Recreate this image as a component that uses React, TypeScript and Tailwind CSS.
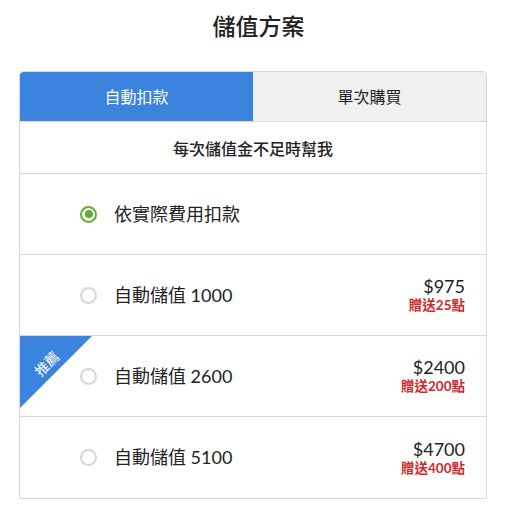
const plans = [
  { label: "自動儲值 1000", price: "$975", bonus: "贈送25點" },
  { label: "自動儲值 2600", price: "$2400", bonus: "贈送200點", recommended: true },
  { label: "自動儲值 5100", price: "$4700", bonus: "贈送400點" },
];

export default function App() {
  return (
    <div className="min-h-[511px] bg-white font-['Lato','Noto_Sans_CJK_TC',sans-serif] text-[#222]">
      {/* 標題 */}
      <h1 className="pl-[6px] pt-[9px] text-center text-[23px] font-medium leading-[34px]">儲值方案</h1>

      <div className="mx-[19px] mt-[28px] w-[468px] rounded-t-[4px] border border-[#d9d9d9]">
        {/* 分頁 */}
        <div className="flex h-[50px] border-b border-[#d9d9d9]">
          <button
            type="button"
            className="flex flex-1 items-center justify-center rounded-tl-[4px] bg-[#3b83dc] text-[16px] text-white"
          >
            自動扣款
          </button>
          <button
            type="button"
            className="flex flex-1 items-center justify-center rounded-tr-[4px] bg-[#f0f0f0] text-[16px] text-[#222]"
          >
            單次購買
          </button>
        </div>

        {/* 說明 */}
        <div className="flex h-[52px] items-center justify-center border-b border-[#d9d9d9] pt-[2px] text-[16px] font-medium">
          每次儲值金不足時幫我
        </div>

        {/* 依實際費用 */}
        <div className="flex h-[81px] items-center border-b border-[#d9d9d9] pl-[60px]">
          <span className="flex h-[17px] w-[17px] items-center justify-center rounded-full border-2 border-[#62ab37]">
            <span className="h-[8px] w-[8px] rounded-full bg-[#62ab37]" />
          </span>
          <span className="ml-[17px] text-[18px]">依實際費用扣款</span>
        </div>

        {plans.map((p, i) => (
          <div
            key={p.label}
            className={`relative flex h-[81px] items-center pl-[60px] pr-[21px] ${
              i < plans.length - 1 ? "border-b border-[#d9d9d9]" : ""
            }`}
          >
            {p.recommended && (
              <div className="absolute left-0 top-0 h-[72px] w-[72px] overflow-hidden">
                <div className="absolute left-0 top-0 h-0 w-0 border-r-[72px] border-t-[72px] border-r-transparent border-t-[#3b83dc]" />
                <span className="absolute left-[13px] top-[21px] -rotate-45 text-[14px] leading-none text-white">
                  推薦
                </span>
              </div>
            )}
            <span className="h-[17px] w-[17px] rounded-full border-2 border-[#d6d6d6]" />
            <span className="ml-[17px] text-[18px]">{p.label}</span>
            <div className="ml-auto mt-[-2px] flex flex-col items-end">
              <span className="text-[18px] leading-[22px]">{p.price}</span>
              <span className="text-[13.5px] font-bold leading-[16px] text-[#d0282a]">{p.bonus}</span>
            </div>
          </div>
        ))}
      </div>
    </div>
  );
}
